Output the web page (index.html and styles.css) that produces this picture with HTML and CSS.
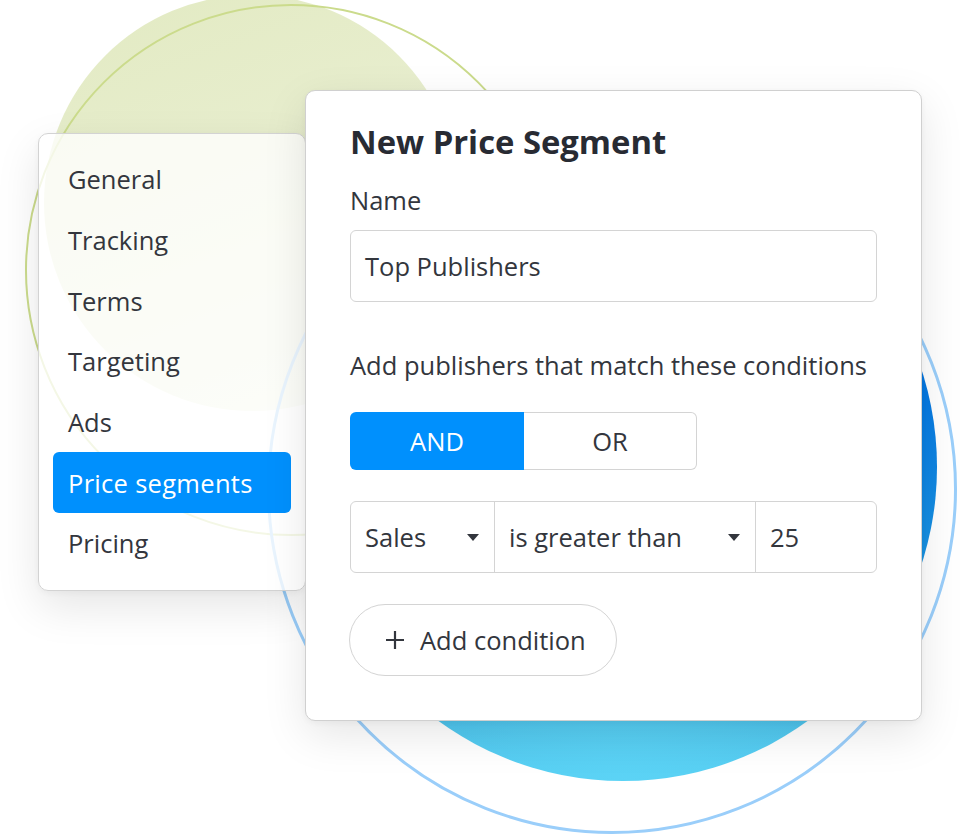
FILE: index.html
```html
<!DOCTYPE html>
<html lang="en">
<head>
<meta charset="utf-8">
<title>New Price Segment</title>
<link rel="stylesheet" href="styles.css">
</head>
<body>
<div class="stage">
  <div class="deco green-fill"></div>
  <div class="deco green-ring"></div>
  <div class="deco blue-ring"></div>
  <div class="deco blue-fill"></div>

  <div class="layout">
    <nav class="menu">
      <div class="menu-item">General</div>
      <div class="menu-item">Tracking</div>
      <div class="menu-item">Terms</div>
      <div class="menu-item">Targeting</div>
      <div class="menu-item">Ads</div>
      <div class="menu-item active">Price segments</div>
      <div class="menu-item">Pricing</div>
    </nav>

    <section class="card">
      <h1 class="title">New Price Segment</h1>
      <div class="label">Name</div>
      <div class="input">Top Publishers</div>
      <div class="hint">Add publishers that match these conditions</div>
      <div class="toggle">
        <div class="toggle-seg on">AND</div>
        <div class="toggle-seg off">OR</div>
      </div>
      <div class="cond">
        <div class="cond-seg field">
          <span>Sales</span>
          <svg class="caret" width="12" height="7" viewBox="0 0 12 7"><path d="M0 0 H12 L6 7 Z" fill="#33363d"/></svg>
        </div>
        <div class="cond-seg op">
          <span>is greater than</span>
          <svg class="caret" width="12" height="7" viewBox="0 0 12 7"><path d="M0 0 H12 L6 7 Z" fill="#33363d"/></svg>
        </div>
        <div class="cond-seg val"><span>25</span></div>
      </div>
      <div class="add-btn">
        <svg class="plus" width="20" height="20" viewBox="0 0 20 20"><path d="M10 1 V19 M1 10 H19" stroke="#33363d" stroke-width="2.2" fill="none"/></svg>
        <span>Add condition</span>
      </div>
    </section>
  </div>
</div>
</body>
</html>
```

FILE: styles.css
```css
html, body {
  margin: 0;
  padding: 0;
  background: #ffffff;
}

body {
  font-family: "Open Sans", "Noto Sans", "Liberation Sans", sans-serif;
  color: #33363d;
}

.stage {
  position: relative;
  width: 960px;
  height: 837px;
  overflow: hidden;
  background: #ffffff;
}

.deco {
  position: absolute;
  border-radius: 50%;
  box-sizing: border-box;
  z-index: 0;
}

.green-fill {
  left: 44px;
  top: -5px;
  width: 416px;
  height: 416px;
  background: linear-gradient(160deg, #e2eac2 0%, #e8eecf 45%, #eff3df 85%, #f5f7ec 100%);
}

.green-ring {
  left: 25px;
  top: 4px;
  width: 532px;
  height: 532px;
  border: 2.5px solid #cbdb8c;
}

.blue-ring {
  left: 267px;
  top: 144px;
  width: 690px;
  height: 690px;
  border: 3px solid #9acefa;
}

.blue-fill {
  left: 309px;
  top: 153px;
  width: 628px;
  height: 628px;
  background:
    radial-gradient(ellipse 60% 40% at 50% 100%, rgba(92, 212, 246, 0.9) 0%, rgba(92, 212, 246, 0) 100%),
    linear-gradient(180deg, #005fd8 0%, #077ae2 40%, #1790e2 62%, #3cb3e6 85%, #55cbef 100%);
}

.layout {
  position: relative;
  z-index: 1;
  display: flex;
  align-items: flex-start;
  padding: 90px 0 0 38px;
}

.menu {
  box-sizing: border-box;
  width: 268px;
  margin-top: 43px;
  padding: 15px 14px 16px;
  border: 1px solid #d3d3d3;
  border-radius: 10px;
  background: rgba(255, 255, 255, 0.78);
  box-shadow: 0 16px 44px rgba(0, 0, 0, 0.10), 0 2px 6px rgba(0, 0, 0, 0.04);
}

.menu-item {
  display: flex;
  align-items: center;
  height: 60.67px;
  padding-left: 15px;
  font-size: 25.5px;
  color: #33363d;
  border-radius: 6px;
}

.menu-item.active {
  background: #0090fd;
  color: #ffffff;
  letter-spacing: 0.3px;
}

.card {
  box-sizing: border-box;
  width: 617px;
  height: 631px;
  margin-left: -1px;
  padding: 31px 44px 0;
  background: #ffffff;
  border: 1px solid #d0d0d0;
  border-radius: 10px;
  box-shadow: 0 14px 44px rgba(0, 0, 0, 0.10), 0 2px 6px rgba(0, 0, 0, 0.04);
}

.title {
  margin: 0;
  font-size: 32.8px;
  line-height: 40px;
  font-weight: 700;
  color: #282b33;
}

.label {
  margin-top: 22px;
  font-size: 25.5px;
  line-height: 32px;
}

.input {
  box-sizing: border-box;
  display: flex;
  align-items: center;
  width: 527px;
  height: 72px;
  margin-top: 14px;
  padding-left: 14px;
  border: 1px solid #d4d4d4;
  border-radius: 6px;
  font-size: 25.5px;
}

.hint {
  margin-top: 47px;
  font-size: 25.5px;
  line-height: 32px;
}

.toggle {
  display: flex;
  width: 347px;
  height: 58px;
  margin-top: 31px;
}

.toggle-seg {
  display: flex;
  align-items: center;
  justify-content: center;
  box-sizing: border-box;
  height: 100%;
  font-size: 25.5px;
}

.toggle-seg.on {
  width: 174px;
  background: #0090fd;
  color: #ffffff;
  border-radius: 6px 0 0 6px;
}

.toggle-seg.off {
  flex: 1;
  border: 1px solid #d4d4d4;
  border-left: none;
  border-radius: 0 6px 6px 0;
}

.cond {
  box-sizing: border-box;
  display: flex;
  width: 527px;
  height: 72px;
  margin-top: 31px;
  border: 1px solid #d4d4d4;
  border-radius: 6px;
  font-size: 25.5px;
}

.cond-seg {
  box-sizing: border-box;
  display: flex;
  align-items: center;
  justify-content: space-between;
  padding: 0 15px 0 14px;
}

.cond-seg.field {
  width: 144px;
  border-right: 1px solid #d4d4d4;
}

.cond-seg.op {
  width: 261px;
  border-right: 1px solid #d4d4d4;
}

.cond-seg.val {
  flex: 1;
}

.caret {
  display: block;
  flex: none;
}

.add-btn {
  box-sizing: border-box;
  display: flex;
  align-items: center;
  gap: 15px;
  width: 268px;
  height: 72px;
  margin-top: 31px;
  margin-left: -1px;
  padding-left: 35px;
  border: 1px solid #d4d4d4;
  border-radius: 36px;
  font-size: 25.5px;
}

.plus {
  display: block;
  flex: none;
}
```
